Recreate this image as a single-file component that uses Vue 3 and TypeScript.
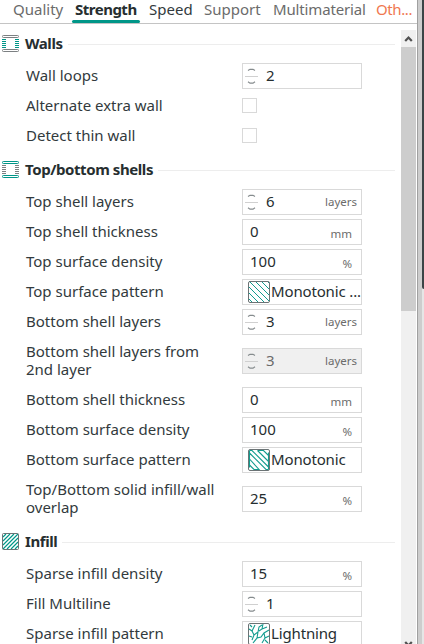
<script setup lang="ts">
type Kind = 'spin' | 'text' | 'check' | 'select'
interface Row {
  label: string
  kind: Kind
  value?: string
  unit?: string
  tall?: boolean
  disabled?: boolean
  icon?: 'lines' | 'framed' | 'bolt'
}
interface Section {
  title: string
  icon: 'walls' | 'shells' | 'infill'
  rows: Row[]
}

const tabs = [
  { name: 'Quality', cls: 't-quality' },
  { name: 'Strength', cls: 't-strength active' },
  { name: 'Speed', cls: 't-speed' },
  { name: 'Support', cls: 't-support' },
  { name: 'Multimaterial', cls: 't-multi' },
  { name: 'Oth...', cls: 't-other' },
]

const sections: Section[] = [
  {
    title: 'Walls',
    icon: 'walls',
    rows: [
      { label: 'Wall loops', kind: 'spin', value: '2' },
      { label: 'Alternate extra wall', kind: 'check' },
      { label: 'Detect thin wall', kind: 'check' },
    ],
  },
  {
    title: 'Top/bottom shells',
    icon: 'shells',
    rows: [
      { label: 'Top shell layers', kind: 'spin', value: '6', unit: 'layers' },
      { label: 'Top shell thickness', kind: 'text', value: '0', unit: 'mm' },
      { label: 'Top surface density', kind: 'text', value: '100', unit: '%' },
      { label: 'Top surface pattern', kind: 'select', value: 'Monotonic ...', icon: 'lines' },
      { label: 'Bottom shell layers', kind: 'spin', value: '3', unit: 'layers' },
      { label: 'Bottom shell layers from\n2nd layer', kind: 'spin', value: '3', unit: 'layers', tall: true, disabled: true },
      { label: 'Bottom shell thickness', kind: 'text', value: '0', unit: 'mm' },
      { label: 'Bottom surface density', kind: 'text', value: '100', unit: '%' },
      { label: 'Bottom surface pattern', kind: 'select', value: 'Monotonic', icon: 'framed' },
      { label: 'Top/Bottom solid infill/wall\noverlap', kind: 'text', value: '25', unit: '%', tall: true },
    ],
  },
  {
    title: 'Infill',
    icon: 'infill',
    rows: [
      { label: 'Sparse infill density', kind: 'text', value: '15', unit: '%' },
      { label: 'Fill Multiline', kind: 'spin', value: '1' },
      { label: 'Sparse infill pattern', kind: 'select', value: 'Lightning', icon: 'bolt' },
    ],
  },
]
</script>

<template>
  <div class="window">
    <div class="panel">
      <nav class="tabs">
        <span v-for="t in tabs" :key="t.name" class="tab" :class="t.cls">{{ t.name }}</span>
      </nav>
      <div class="body">
        <div class="settings">
          <section v-for="s in sections" :key="s.title">
            <header class="head">
              <svg class="head-icon" :class="s.icon" viewBox="0 0 17 17">
                <template v-if="s.icon !== 'infill'">
                  <path class="sides" d="M0 4.5h4M0 6.5h4M0 8.5h4M0 10.5h4M0 12.5h4M13 4.5h4M13 6.5h4M13 8.5h4M13 10.5h4M13 12.5h4" />
                  <rect class="caps" x=".5" y=".5" width="16" height="2" rx=".8" />
                  <rect class="caps" x=".5" y="14.5" width="16" height="2" rx=".8" />
                </template>
                <template v-else>
                  <path class="hatch dense" d="M1 4l3-3M1 8l7-7M1 12L12 1M1 16L16 1M5 16L16 5M9 16l7-7M13 16l3-3" />
                  <rect class="frame" x=".5" y=".5" width="16" height="16" rx="1" />
                </template>
              </svg>
              <h2>{{ s.title }}</h2>
              <span class="rule"></span>
            </header>
            <div v-for="r in s.rows" :key="r.label" class="row" :class="{ tall: r.tall }">
              <label>{{ r.label }}</label>
              <span v-if="r.kind === 'check'" class="check"></span>
              <div v-else class="field" :class="[r.kind, { disabled: r.disabled }]">
                <svg v-if="r.kind === 'spin'" class="stepper" viewBox="0 0 13 24">
                  <path class="arrow" d="M3 6.500L5 5.300H8L10 6.500M3 17.800L5 19.200H8L10 17.800" />
                  <path class="split" d="M0 12.5h13" />
                </svg>
                <svg v-if="r.kind === 'select'" class="pattern" viewBox="0 0 22 22">
                  <path v-if="r.icon === 'lines'" class="hatch" d="M1 18l3 3M1 12l9 9M1 6l15 15M1 0l20 20M7 0l14 14M13 0l8 8M19 0l2 2" />
                  <path v-else-if="r.icon === 'framed'" class="hatch framed" d="M1.500 1.500v17M20.500 3.500v17M1.500 16l4.500 4.500h5L1.500 10M1.500 4L18 20.500h2.500M1.500 1.500H4L20.500 18M9.500 1.500l11 11M9.500 1.500h6l5 5" />
                  <path v-else class="hatch bolt" d="M1 6l3 2 2 4-2 5M4 8l3-6M6 12l4-3 1-5 3-2M10 9l-1 6-4 5M9 15l4-1 3-4 5-3M15 1l-1 5-3 2M14 6l5-2M16 10l1 5-3 5M17 15l4-2M17 17l3 3M1 13l3 1M2 2l2 2" />
                  <rect class="frame" x=".5" y=".5" width="21" height="21" rx="1.5" />
                </svg>
                <span class="value">{{ r.value }}</span>
                <span v-if="r.unit" class="unit" :class="{ low: r.kind === 'text' }">{{ r.unit }}</span>
              </div>
            </div>
          </section>
        </div>
        <aside class="scrollbar">
          <svg class="sb-btn" viewBox="0 0 15 17"><path d="M4.200 11L7.500 7.500l3.300 3.500" /></svg>
          <div class="thumb"></div>
          <svg class="sb-btn down" viewBox="0 0 15 17"><path d="M4.200 7L7.500 10.500l3.300-3.500" /></svg>
        </aside>
      </div>
    </div>
    <div class="divider"></div>
    <div class="viewport"><div class="canvas-dark"></div></div>
  </div>
</template>

<style>
body { background: #fff; overflow: hidden; }
</style>

<style scoped>
* { box-sizing: border-box; }
.window {
  display: flex;
  width: 424px;
  height: 644px;
  overflow: hidden;
  background: #fff;
  font-family: "Noto Sans", "Open Sans", sans-serif;
  font-size: 15px;
  color: #323a3d;
}
.panel { width: 417px; display: flex; flex-direction: column; }
.tabs {
  display: flex;
  height: 24px;
  flex: none;
  padding-left: 13px;
  border-bottom: 1px solid #c4c4c4;
  color: #6b6b6b;
}
.tab { height: 23px; line-height: 18px; white-space: nowrap; flex: none; }
.t-quality { width: 59px; }
.t-strength { display: flex; flex-direction: column; width: 68px; margin-right: 9px; text-indent: 3px; font-weight: 700; letter-spacing: -0.5px; color: #262e30; }
.t-strength::after { content: ""; height: 3px; margin-top: 2px; border-radius: 1.5px; background: #009688; }
.t-speed { width: 55px; color: #323a3d; }
.t-support { width: 69px; }
.t-multi { width: 103px; letter-spacing: -0.15px; }
.t-other { color: #f07850; letter-spacing: -0.4px; }
.body { display: flex; flex: 1; min-height: 0; padding-top: 1px; }
.settings { width: 401px; overflow: hidden; flex: none; }
.head { display: flex; align-items: center; height: 36px; padding: 1px 6px 0 2px; }
.head-icon { width: 17px; height: 17px; flex: none; margin-right: 6px; fill: none; }
h2 { margin: 0 5px 0 0; padding-bottom: 2px; font-size: 15px; line-height: 20px; font-weight: 700; letter-spacing: -0.42px; color: #262e30; white-space: nowrap; }
.rule { flex: 1; height: 1px; margin-top: 2px; background: #ededed; }
.walls .sides, .shells .caps { stroke: #009688; }
.walls .caps, .shells .sides { stroke: #7c8082; }
.hatch { stroke: #139c8f; fill: none; stroke-width: 1; }
.hatch.dense { stroke: #009688; stroke-width: 1.15; }
.hatch.framed { stroke-width: 1.1; }
.hatch.bolt { stroke-width: 1.1; }
.frame { stroke: #6b7375; fill: none; }
.row { display: flex; align-items: center; height: 30px; padding-left: 26px; }
.row.tall { height: 48px; }
label { width: 216px; flex: none; padding-bottom: 2px; line-height: 18px; white-space: pre; }
.check { width: 15px; height: 15px; margin-bottom: 1px; border: 1px solid #d9d9d9; }
.field { display: flex; align-items: center; width: 120px; height: 26px; border: 1px solid #d9d9d9; background: #fff; white-space: nowrap; overflow: hidden; }
.field.text { padding-left: 7px; }
.field.select { padding-left: 5px; }
.field.disabled { background: #f0f0f0; }
.disabled .value { color: #6b6b6b; }
.stepper { width: 13px; height: 24px; margin: 0 8px 0 2px; flex: none; }
.arrow { fill: none; stroke: #858b8d; stroke-width: 1.2; }
.split { stroke: #d0d0d0; }
.pattern { width: 22px; height: 22px; flex: none; margin-right: 1px; }
.value { padding-bottom: 2px; line-height: 20px; color: #262e30; }
.select .value { letter-spacing: -0.15px; }
.unit { margin-left: auto; margin-right: 4px; padding-bottom: 1px; font-size: 11.5px; color: #6b6b6b; }
.unit.low { margin-right: 9px; padding-top: 4px; }
.scrollbar { display: flex; flex-direction: column; width: 15px; margin-top: 5px; background: #f0f0f0; }
.sb-btn { width: 15px; height: 17px; flex: none; fill: none; stroke: #505050; stroke-width: 2.2; }
.thumb { height: 264px; background: #cdcdcd; }
.down { margin-top: auto; margin-bottom: -8px; }
.divider { width: 5px; background: #cdcdcd; border-left: 1px solid #a0a0a0; }
.viewport { flex: 1; background: #e6e6e6; }
.canvas-dark { height: 289px; background: #3b4446; border-bottom-left-radius: 2px; }
</style>
